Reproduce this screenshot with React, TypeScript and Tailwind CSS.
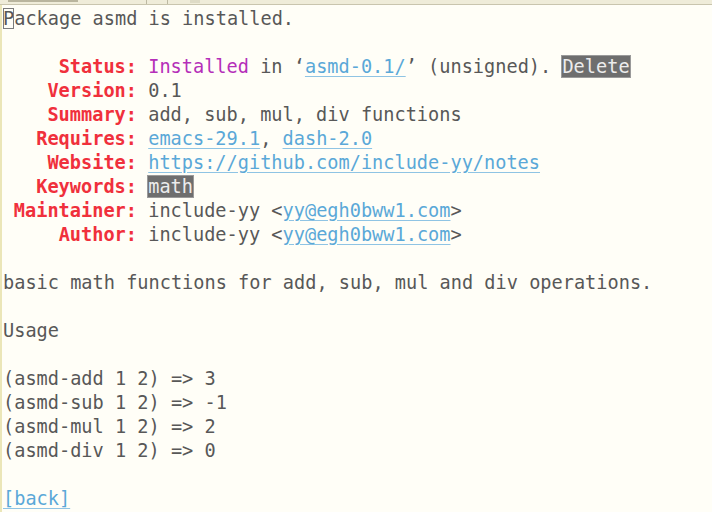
import React from "react";

const mono = "font-['DejaVu_Sans_Mono','Liberation_Mono',monospace]";

const Link = ({ children }: { children: React.ReactNode }) => (
  <span className="text-[#5aa8d8] underline decoration-[#8fc4e4] underline-offset-[3px]">{children}</span>
);

const Btn = ({ children }: { children: React.ReactNode }) => (
  <span className="bg-[#6e6e6e] text-[#ececec] outline outline-1 outline-[#9a9a9a]">{children}</span>
);

const Field = ({ label, children }: { label: string; children?: React.ReactNode }) => (
  <div className="h-6 leading-6 whitespace-pre">
    <span className="inline-block w-[134px] text-right font-bold text-[#f0303c]">{label}:</span>
    <span> </span>
    {children}
  </div>
);

const Line = ({ children }: { children?: React.ReactNode }) => (
  <div className="h-6 leading-6 whitespace-pre">{children}</div>
);

export default function App() {
  return (
    <div className={`w-[712px] h-[512px] overflow-hidden bg-[#fffef7] flex flex-col ${mono} text-[18.6px] text-[#585858]`}>
      {/* bottom edge of the tab line, mostly scrolled off */}
      <div className="h-[5px] shrink-0 bg-[#efecd9] border-b border-[#c9c5ae] flex items-start">
        <span className="ml-[8px] w-[70px] h-[2px] bg-[#b9b59e]" />
        <span className="ml-[68px] w-[1px] h-[4px] bg-[#bdb9a2]" />
        <span className="ml-[20px] w-[1px] h-[4px] bg-[#bdb9a2]" />
        <span className="ml-[22px] w-[10px] h-[3px] bg-[#dedbc6]" />
      </div>
      <div className="flex flex-1">
        <div className="w-[2px] bg-[#ebe6b8] shrink-0" />
        <div className="pl-[1px] pt-[2px] flex-1">
          <Line>
            <span className="outline outline-1 outline-[#7c7c7c] outline-offset-[-1px]">P</span>ackage asmd is installed.
          </Line>
          <Line />
          <Field label="Status">
            <span className="text-[#b52fb9]">Installed</span> in ‘<Link>asmd-0.1/</Link>’ (unsigned). <Btn>Delete</Btn>
          </Field>
          <Field label="Version">0.1</Field>
          <Field label="Summary">add, sub, mul, div functions</Field>
          <Field label="Requires">
            <Link>emacs-29.1</Link>, <Link>dash-2.0</Link>
          </Field>
          <Field label="Website">
            <Link>https://github.com/include-yy/notes</Link>
          </Field>
          <Field label="Keywords">
            <Btn>math</Btn>
          </Field>
          <Field label="Maintainer">
            include-yy &lt;<Link>yy@egh0bww1.com</Link>&gt;
          </Field>
          <Field label="Author">
            include-yy &lt;<Link>yy@egh0bww1.com</Link>&gt;
          </Field>
          <Line />
          <Line>basic math functions for add, sub, mul and div operations.</Line>
          <Line />
          <Line>Usage</Line>
          <Line />
          <Line>(asmd-add 1 2) =&gt; 3</Line>
          <Line>(asmd-sub 1 2) =&gt; -1</Line>
          <Line>(asmd-mul 1 2) =&gt; 2</Line>
          <Line>(asmd-div 1 2) =&gt; 0</Line>
          <Line />
          <Line>
            <Link>[back]</Link>
          </Line>
        </div>
      </div>
    </div>
  );
}
